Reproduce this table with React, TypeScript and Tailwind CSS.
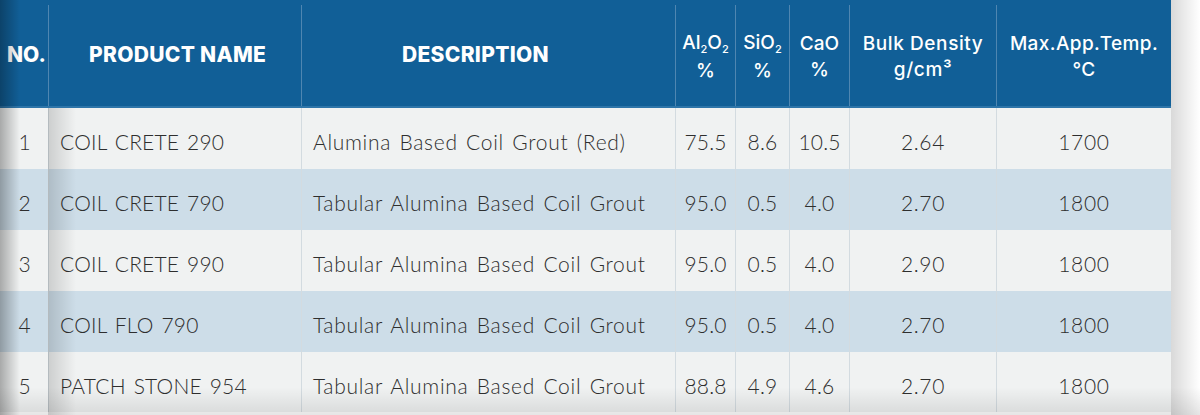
const cols = "grid grid-cols-[48px_253px_374px_60px_54px_60px_147px_175px]";

const rows = [
  { no: 1, name: "COIL CRETE 290", desc: "Alumina Based Coil Grout (Red)", al: "75.5", si: "8.6", ca: "10.5", bd: "2.64", t: "1700" },
  { no: 2, name: "COIL CRETE 790", desc: "Tabular Alumina Based Coil Grout", al: "95.0", si: "0.5", ca: "4.0", bd: "2.70", t: "1800" },
  { no: 3, name: "COIL CRETE 990", desc: "Tabular Alumina Based Coil Grout", al: "95.0", si: "0.5", ca: "4.0", bd: "2.90", t: "1800" },
  { no: 4, name: "COIL FLO 790", desc: "Tabular Alumina Based Coil Grout", al: "95.0", si: "0.5", ca: "4.0", bd: "2.70", t: "1800" },
  { no: 5, name: "PATCH STONE 954", desc: "Tabular Alumina Based Coil Grout", al: "88.8", si: "4.9", ca: "4.6", bd: "2.70", t: "1800" },
];

function Sub({ children }: { children: React.ReactNode }) {
  return <span className="text-[11px] relative top-[4px]">{children}</span>;
}

export default function App() {
  return (
    <div className="relative w-[1200px] h-[415px] overflow-hidden bg-white font-['Inter',sans-serif]">
      <div className="w-[1171px] flex flex-col">
        {/* header */}
        <div className={`${cols} h-[108px] pt-[5px] bg-[#115f97] border-b-2 border-[#2e75a9] text-white`}>
          <div className="flex items-center pl-[7px] pb-[2px] text-[21px] font-extrabold">NO.</div>
          <div className="flex items-center pl-[40px] pb-[2px] border-l border-[#4f86b1] text-[21px] font-extrabold tracking-[0.3px]">PRODUCT NAME</div>
          <div className="flex items-center pl-[100px] pb-[2px] border-l border-[#4f86b1] text-[21px] font-extrabold tracking-[0.3px]">DESCRIPTION</div>
          <div className="flex flex-col items-center justify-center pt-[2px] border-l border-[#4f86b1] text-[19px] font-medium leading-[26px]">
            <span>Al<Sub>2</Sub>O<Sub>2</Sub></span>
            <span>%</span>
          </div>
          <div className="flex flex-col items-center justify-center pt-[2px] border-l border-[#4f86b1] text-[19px] font-medium leading-[26px]">
            <span>SiO<Sub>2</Sub></span>
            <span>%</span>
          </div>
          <div className="flex flex-col items-center justify-center pt-[2px] border-l border-[#4f86b1] text-[19px] font-medium leading-[26px]">
            <span>CaO</span>
            <span>%</span>
          </div>
          <div className="flex flex-col items-center justify-center pt-[2px] border-l border-[#4f86b1] text-[19px] font-medium leading-[26px] tracking-[0.6px]">
            <span>Bulk Density</span>
            <span>g/cm³</span>
          </div>
          <div className="flex flex-col items-center justify-center pt-[2px] border-l border-[#4f86b1] text-[19px] font-medium leading-[26px] tracking-[0.4px]">
            <span>Max.App.Temp.</span>
            <span>°C</span>
          </div>
        </div>

        {/* body */}
        {rows.map((r, i) => (
          <div
            key={r.no}
            className={`${cols} ${i === 4 ? "h-[60px]" : "h-[61px]"} ${i % 2 === 0 ? "bg-[#f0f2f2]" : "bg-[#cddde8]"} font-['Lato',sans-serif] text-[21px] font-light tracking-[0.7px] [word-spacing:2px] text-[#2e2e2e]`}
          >
            <div className="flex items-center justify-center pt-[7px] pl-[2px]">{r.no}</div>
            <div className="flex items-center pt-[7px] pl-[11px] border-l border-[#d3dbe0] tracking-[0.2px]">{r.name}</div>
            <div className="flex items-center pt-[7px] pl-[11px] border-l border-[#d3dbe0]">{r.desc}</div>
            <div className="flex items-center justify-center pt-[7px] border-l border-[#d3dbe0] tracking-[0.2px]">{r.al}</div>
            <div className="flex items-center justify-center pt-[7px] border-l border-[#d3dbe0] tracking-[0.2px]">{r.si}</div>
            <div className="flex items-center justify-center pt-[7px] border-l border-[#d3dbe0] tracking-[0.2px]">{r.ca}</div>
            <div className="flex items-center justify-center pt-[7px] border-l border-[#d3dbe0]">{r.bd}</div>
            <div className="flex items-center justify-center pt-[7px] border-l border-[#d3dbe0]">{r.t}</div>
          </div>
        ))}
      </div>

      {/* scan shading */}
      <div className="absolute left-0 top-0 h-full w-[20px] bg-gradient-to-r from-black/30 to-transparent pointer-events-none" />
      <div className="absolute left-[48px] top-[108px] bottom-0 w-[28px] bg-gradient-to-r from-black/15 to-transparent pointer-events-none" />
      <div className="absolute left-[1171px] top-0 h-full w-[29px] bg-gradient-to-r from-black/15 to-transparent pointer-events-none" />
      <div className="absolute left-0 bottom-0 w-full h-[28px] bg-gradient-to-b from-transparent to-black/10 pointer-events-none" />
    </div>
  );
}
